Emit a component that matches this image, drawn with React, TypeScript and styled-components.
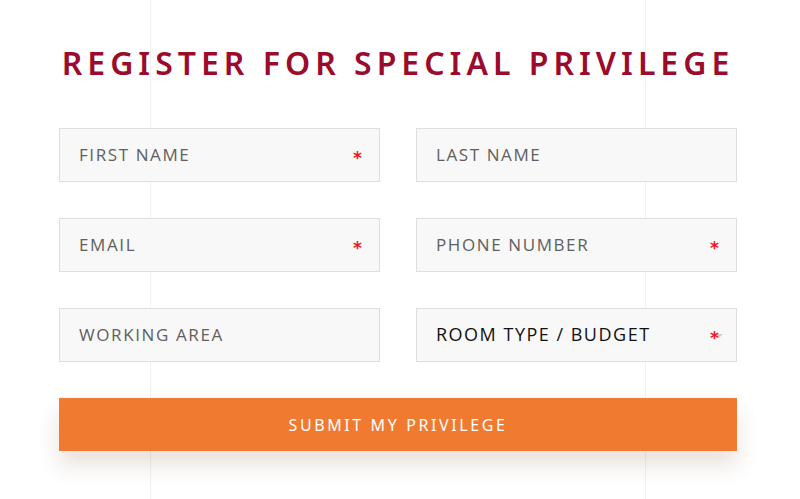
import * as React from 'react'
import styled, { createGlobalStyle } from 'styled-components'

const GlobalStyle = createGlobalStyle`
    html, body {
        margin: 0;
        padding: 0;
    }
    body {
        width: 800px;
        height: 499px;
        overflow: hidden;
        background-color: #ffffff;
        background-image:
            linear-gradient(#f1f1f1, #f1f1f1),
            linear-gradient(#f1f1f1, #f1f1f1);
        background-size: 1px 100%, 1px 100%;
        background-position: 150px 0, 645px 0;
        background-repeat: no-repeat;
        font-family: "Open Sans", "Liberation Sans", sans-serif;
    }
`

const Page = styled.main`
    padding: 43px 63px 0 59px;
    display: flex;
    flex-direction: column;
`

const Title = styled.h1`
    margin: 0;
    text-align: center;
    font-family: "Noto Sans", "Liberation Sans", sans-serif;
    font-weight: 600;
    font-size: 32px;
    line-height: 40px;
    letter-spacing: 5px;
    color: #9b0b2b;
`

const Form = styled.form`
    margin-top: 45px;
    display: grid;
    grid-template-columns: 321px 321px;
    column-gap: 36px;
    row-gap: 36px;
`

const Field = styled.div`
    position: relative;
    height: 54px;
`

const Input = styled.input`
    box-sizing: border-box;
    width: 100%;
    height: 100%;
    margin: 0;
    padding: 0 19px 2px;
    border: 1px solid #dedede;
    background: #f8f8f8;
    font-family: "Open Sans", "Liberation Sans", sans-serif;
    font-size: 17px;
    letter-spacing: 1.6px;
    color: #555;
    outline: none;
    &::placeholder {
        color: #606060;
        opacity: 1;
    }
`

const Select = styled.div`
    box-sizing: border-box;
    height: 100%;
    padding: 0 19px 2px;
    border: 1px solid #dedede;
    background: #f8f8f8;
    display: flex;
    align-items: center;
    font-size: 18px;
    letter-spacing: 1.5px;
    color: #111;
`

const Caret = styled.span`
    position: absolute;
    right: 14px;
    top: 26px;
    width: 0;
    height: 0;
    border-left: 4px solid transparent;
    border-right: 4px solid transparent;
    border-top: 4px solid #cfcfcf;
`

const Star = styled.span`
    position: absolute;
    right: 18px;
    top: 22px;
    color: #f2141e;
    font-family: "DejaVu Sans", sans-serif;
    font-size: 17px;
    font-weight: 700;
    line-height: 17px;
`

const Submit = styled.button`
    grid-column: 1 / span 2;
    height: 53px;
    border: 1px solid #ee7a36;
    background: #f07a2f;
    color: #fff;
    font-family: "Noto Sans", "Liberation Sans", sans-serif;
    font-size: 16px;
    letter-spacing: 2.6px;
    box-shadow: 0 14px 22px rgba(120, 70, 30, 0.16);
    cursor: pointer;
`

const fields = [
    { name: 'FIRST NAME', required: true },
    { name: 'LAST NAME', required: false },
    { name: 'EMAIL', required: true },
    { name: 'PHONE NUMBER', required: true },
    { name: 'WORKING AREA', required: false },
]

export default function App() {
    return (
        <>
            <GlobalStyle />
            <Page>
                <Title>REGISTER FOR SPECIAL PRIVILEGE</Title>
                <Form onSubmit={(e) => e.preventDefault()}>
                    {fields.map((f) => (
                        <Field key={f.name}>
                            <Input placeholder={f.name} />
                            {f.required && <Star>*</Star>}
                        </Field>
                    ))}
                    <Field>
                        <Select>ROOM TYPE / BUDGET</Select>
                        <Caret />
                        <Star>*</Star>
                    </Field>
                    <Submit type="submit">SUBMIT MY PRIVILEGE</Submit>
                </Form>
            </Page>
        </>
    )
}
